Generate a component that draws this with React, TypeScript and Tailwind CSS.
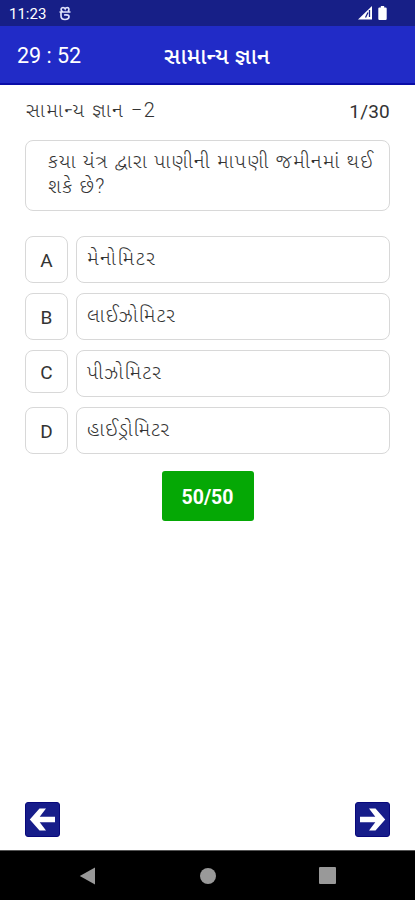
import React from "react";

interface Option {
  key: string;
  text: string;
  keyHeight: string;
  tracking: string;
}

const options: Option[] = [
  { key: "A", text: "મેનોમિટર", keyHeight: "h-[47px]", tracking: "tracking-[1.7px]" },
  { key: "B", text: "લાઈઝોમિટર", keyHeight: "h-[47px]", tracking: "tracking-[1.1px]" },
  { key: "C", text: "પીઝોમિટર", keyHeight: "h-[43px]", tracking: "tracking-[1.3px]" },
  { key: "D", text: "હાઈડ્રોમિટર", keyHeight: "h-[47px]", tracking: "tracking-[0.9px]" },
];

const StatusBar = () => (
  <div className="flex h-[26px] items-center bg-[#171f87] pl-[9px] pr-[28px] text-white">
    <span className="pt-px text-[15px] leading-[26px]">11:23</span>
    <svg className="ml-[13px]" width="12" height="15" viewBox="0 0 12 15" fill="none" stroke="#dfe1fb" strokeWidth="1.7">
      <path d="M0.5 6h11M3.7 5.7C1.3 4.5 1.7 1.6 4 1.5c1.2 0 1.8.5 2.2 1.3C6.6 2 7.3 1.5 8.2 1.5c2 .1 2.2 2.4.9 3.9M2 6v3.8c0 2.4 1.5 3.7 4 3.7s4-1.3 4-2.9c0-1.5-1.6-2-5-1.6" />
    </svg>
    <svg className="ml-auto" width="15" height="14" viewBox="0 0 15 14">
      <path d="M0 13.5 14 0v13.5Z" fill="#fff" />
      <path d="M11.5 4v7M10 6.5 7.5 11.5" stroke="#171f87" strokeWidth="1.3" />
    </svg>
    <svg className="ml-[5px]" width="9" height="14" viewBox="0 0 9 15" fill="#fff">
      <path d="M2.7 0h3.6v1.5h1.5q1.2 0 1.2 1.2v11q0 1.3-1.2 1.3H1.2Q0 15 0 13.7v-11q0-1.2 1.2-1.2h1.5Z" />
    </svg>
  </div>
);

const Header = () => (
  <header className="grid h-[59px] grid-cols-[146px_1fr_127px] items-center border-b-2 border-[#0a0da8] bg-[#212bc7] text-white">
    <span className="pt-[4px] pl-[17px] text-[21.5px]">29 : 52</span>
    <h1 className="pt-[3px] text-center text-[22.5px] leading-[32px] font-medium tracking-[0.2px] whitespace-nowrap">સામાન્ય જ્ઞાન</h1>
  </header>
);

const ArrowButton = ({ next = false }: { next?: boolean }) => (
  <button className="flex h-[35px] w-[35px] items-center justify-center rounded-[3px] border border-[#08087b] bg-[#171d8a]">
    <svg className={next ? "shrink-0 rotate-180" : "shrink-0"} width="27" height="25" viewBox="0 0 27 25" fill="#fff">
      <path d="M0.8 12.5 10.5 1.5H17L10.7 9.7H26v5.6H10.7L17 23.5h-6.5Z" />
    </svg>
  </button>
);

const NavBar = () => (
  <nav className="flex h-[50px] items-center border-t border-[#555] bg-black pl-[79px]">
    <svg width="17" height="18" viewBox="0 0 17 18" fill="#999">
      <path d="M0.8 9 16 0.5v17Z" />
    </svg>
    <span className="ml-[104px] h-4 w-4 rounded-full bg-[#999]" />
    <span className="ml-[103px] h-[17px] w-[17px] rounded-[1px] bg-[#999]" />
  </nav>
);

export default function App() {
  return (
    <div className="flex h-[900px] w-[415px] flex-col bg-white font-['Roboto','Noto_Sans_Gujarati','Noto_Sans',sans-serif] text-[#333]">
      <StatusBar />
      <Header />

      <main className="flex flex-1 flex-col px-[25px]">
        <div className="flex h-[55px] items-start justify-between">
          <span className="pt-[10px] pl-px text-[20px] leading-[30px] font-light tracking-[1.6px] whitespace-nowrap">સામાન્ય જ્ઞાન −2</span>
          <span className="pt-[12px] text-[19px] leading-[30px] tracking-[0.2px]">1/30</span>
        </div>

        {/* question */}
        <div className="h-[71px] rounded-lg border border-[#d8d8d8] pl-[22px] pt-[8px] text-[20px] font-light leading-[25px] tracking-[1.31px] whitespace-nowrap">
          <p>કયા યંત્ર દ્વારા પાણીની માપણી જમીનમાં થઈ</p>
          <p>શકે છે?</p>
        </div>

        {/* options */}
        <div className="mt-[25px] flex flex-col gap-[10px]">
          {options.map((option) => (
            <div key={option.key} className="flex h-[47px] gap-[8px]">
              <div className={`flex w-[43px] items-center justify-center rounded-lg border border-[#d8d8d8] pt-[3px] text-[19px] ${option.keyHeight}`}>
                {option.key}
              </div>
              <div className={`flex flex-1 items-center rounded-lg border border-[#d8d8d8] pb-[3px] pl-[10px] text-[20px] font-light whitespace-nowrap ${option.tracking}`}>
                {option.text}
              </div>
            </div>
          ))}
        </div>

        <button className="mt-[17px] h-[50px] w-[92px] self-center rounded-[3px] bg-[#05a805] pt-[3px] text-[19.5px] font-bold text-white">
          50/50
        </button>

        <div className="mt-auto mb-[13px] flex justify-between">
          <ArrowButton />
          <ArrowButton next />
        </div>
      </main>

      <NavBar />
    </div>
  );
}
